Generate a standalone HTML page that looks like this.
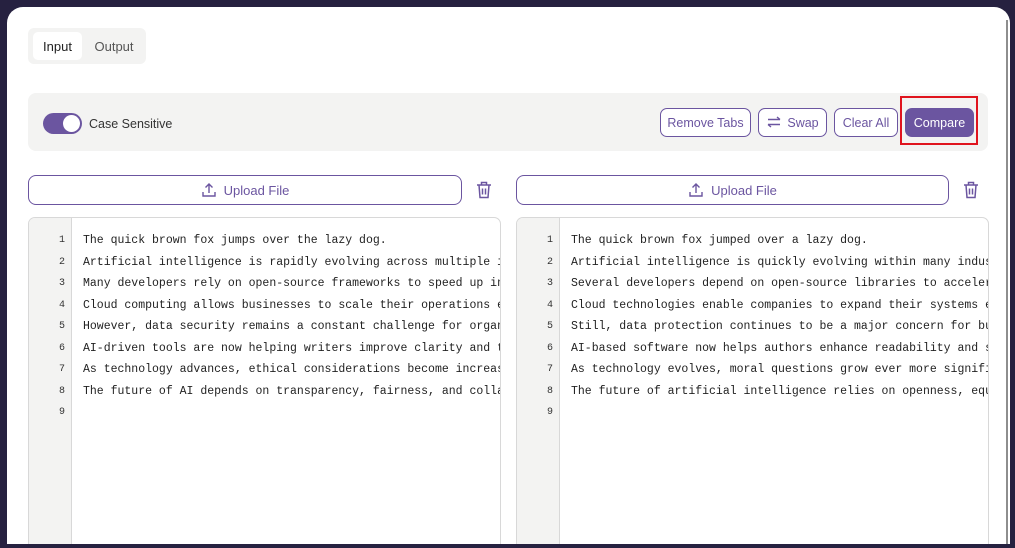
<!DOCTYPE html>
<html><head><meta charset="utf-8"><style>
*{box-sizing:border-box;margin:0;padding:0}
html,body{overflow:hidden}
body{width:1015px;height:548px;background:#262140;position:relative;overflow:hidden;font-family:"Liberation Sans",sans-serif}
.card{position:absolute;left:7px;top:7px;width:1003px;height:537px;background:#fff;border-radius:16px 16px 0 0;overflow:hidden}
.abs{position:absolute}
.sb{position:absolute;left:999px;top:13px;width:2px;height:524px;background:#8e8e8e}
.tabs{left:21px;top:21px;width:118px;height:36px;background:#f3f3f2;border-radius:6px}
.tab{position:absolute;top:4px;height:28px;line-height:30px;font-size:13px;color:#555;text-align:center}
.tool{left:21px;top:86px;width:960px;height:58px;background:#f3f3f2;border-radius:8px}
.tog{left:15px;top:20px;width:39px;height:21px;border-radius:11px;background:#6b55a0}
.knob{position:absolute;right:2px;top:2px;width:17px;height:17px;border-radius:50%;background:#fff}
.btn{position:absolute;top:15px;height:29px;border:1.5px solid #6b55a0;border-radius:7px;font-size:12.5px;color:#6b55a0;line-height:29px;text-align:center;background:#fff;white-space:nowrap}
.up{height:30px;top:168px;border:1.3px solid #6b55a0;border-radius:8px;font-size:13px;color:#6b55a0;text-align:center;line-height:30px}
.ed{top:210px;width:473px;height:327px;border:1px solid #d8d8d8;border-bottom:none;border-radius:7px 7px 0 0;overflow:hidden;background:#fff}
.gut{position:absolute;left:0;top:0;width:43px;height:100%;background:#f3f3f2;border-right:1px solid #d8d8d8}
.ln{position:absolute;left:0;top:12px;width:36px;text-align:right;font-family:"Liberation Mono",monospace;font-size:10px;color:#333;line-height:21.5px}
.code{position:absolute;left:54px;top:12px;font-family:"Liberation Mono",monospace;font-size:11.5px;color:#222;white-space:pre;line-height:21.5px}
</style></head><body>
<div class="card">
<div class="sb"></div>
<div class="abs tabs"><div class="tab" style="left:5px;width:49px;background:#fff;border-radius:5px;color:#222">Input</div><div class="tab" style="left:58px;width:56px">Output</div></div>
<div class="abs tool">
<div class="abs tog"><div class="knob"></div></div>
<div class="abs" style="left:61px;top:24px;font-size:12.5px;color:#333">Case Sensitive</div>
<div class="btn" style="left:632px;width:91px">Remove Tabs</div>
<div class="btn" style="left:730px;width:69px"><svg width="16" height="12" viewBox="0 0 16 12" style="vertical-align:-1px;margin-right:5px" fill="none" stroke="#6b55a0" stroke-width="1.4"><path d="M2 3.5h12M11 1l3 2.5M2 8.5h12M5 11l-3-2.5"/></svg>Swap</div>
<div class="btn" style="left:806px;width:64px">Clear All</div>
<div class="btn" style="left:877px;width:69px;background:#6b55a0;color:#fff">Compare</div>
<div class="abs" style="left:872px;top:3px;width:78px;height:49px;border:2px solid #e0141e"></div>
</div>
<div class="abs up" style="left:21px;width:434px"><svg width="16" height="16" viewBox="0 0 16 16" fill="none" stroke="#6b55a0" stroke-width="1.4" style="vertical-align:-3px;margin-right:7px"><path d="M8 11V2M4.5 5.5L8 2l3.5 3.5M2 10v4h12v-4"/></svg>Upload File</div>
<svg class="abs" style="left:469px;top:174px" width="16" height="18" viewBox="0 0 16 18" fill="none" stroke="#6b55a0" stroke-width="1.5"><path d="M1 4h14M5.5 4V1.5h5V4M3 4l1 12.5h8L13 4M6.5 7.5v6M9.5 7.5v6"/></svg>
<div class="abs up" style="left:509px;width:433px"><svg width="16" height="16" viewBox="0 0 16 16" fill="none" stroke="#6b55a0" stroke-width="1.4" style="vertical-align:-3px;margin-right:7px"><path d="M8 11V2M4.5 5.5L8 2l3.5 3.5M2 10v4h12v-4"/></svg>Upload File</div>
<svg class="abs" style="left:956px;top:174px" width="16" height="18" viewBox="0 0 16 18" fill="none" stroke="#6b55a0" stroke-width="1.5"><path d="M1 4h14M5.5 4V1.5h5V4M3 4l1 12.5h8L13 4M6.5 7.5v6M9.5 7.5v6"/></svg>
<div class="abs ed" style="left:21px"><div class="gut"></div>
<div class="ln">1<br>2<br>3<br>4<br>5<br>6<br>7<br>8<br>9</div>
<div class="code">The quick brown fox jumps over the lazy dog.
Artificial intelligence is rapidly evolving across multiple industries.
Many developers rely on open-source frameworks to speed up innovation.
Cloud computing allows businesses to scale their operations efficiently.
However, data security remains a constant challenge for organizations.
AI-driven tools are now helping writers improve clarity and tone.
As technology advances, ethical considerations become increasingly important.
The future of AI depends on transparency, fairness, and collaboration.</div></div>
<div class="abs ed" style="left:509px"><div class="gut"></div>
<div class="ln">1<br>2<br>3<br>4<br>5<br>6<br>7<br>8<br>9</div>
<div class="code">The quick brown fox jumped over a lazy dog.
Artificial intelligence is quickly evolving within many industries.
Several developers depend on open-source libraries to accelerate innovation.
Cloud technologies enable companies to expand their systems easily.
Still, data protection continues to be a major concern for businesses.
AI-based software now helps authors enhance readability and style.
As technology evolves, moral questions grow ever more significant.
The future of artificial intelligence relies on openness, equity, and teamwork.</div></div>
</div>
</body></html>
